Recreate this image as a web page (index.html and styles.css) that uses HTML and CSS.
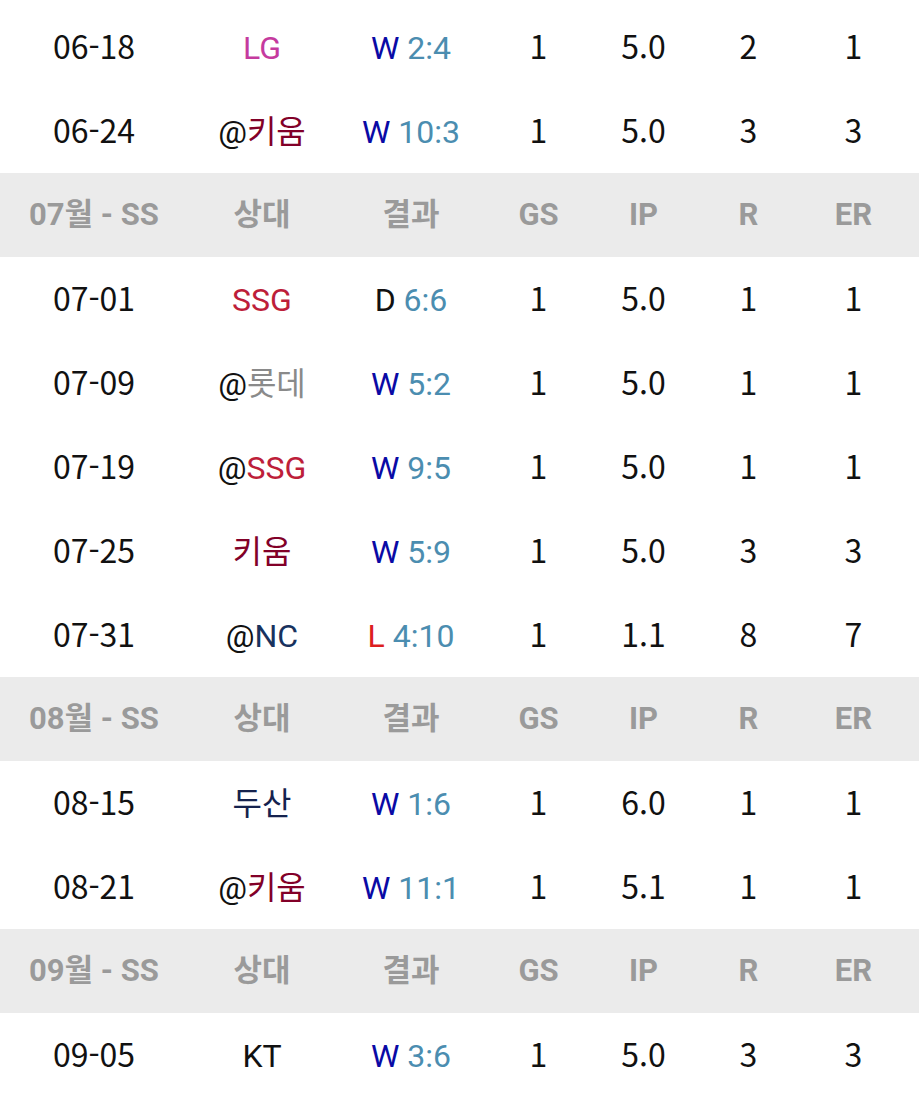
FILE: index.html
```html
<!DOCTYPE html>
<html lang="ko">
<head>
<meta charset="utf-8">
<title>월별 기록</title>
<link rel="stylesheet" href="styles.css">
</head>
<body>
<div class="table">
  <div class="row"><span>06-18</span><span class="team"><span class="lg">LG</span></span><span class="res"><span class="w">W</span> <span class="sc">2:4</span></span><span>1</span><span>5.0</span><span>2</span><span>1</span></div>
  <div class="row"><span>06-24</span><span class="team">@<span class="kw">키움</span></span><span class="res"><span class="w">W</span> <span class="sc">10:3</span></span><span>1</span><span>5.0</span><span>3</span><span>3</span></div>
  <div class="row head"><span>07월 - SS</span><span>상대</span><span>결과</span><span>GS</span><span>IP</span><span>R</span><span>ER</span></div>
  <div class="row"><span>07-01</span><span class="team"><span class="ssg">SSG</span></span><span class="res"><span class="d">D</span> <span class="sc">6:6</span></span><span>1</span><span>5.0</span><span>1</span><span>1</span></div>
  <div class="row"><span>07-09</span><span class="team">@<span class="lt">롯데</span></span><span class="res"><span class="w">W</span> <span class="sc">5:2</span></span><span>1</span><span>5.0</span><span>1</span><span>1</span></div>
  <div class="row"><span>07-19</span><span class="team">@<span class="ssg">SSG</span></span><span class="res"><span class="w">W</span> <span class="sc">9:5</span></span><span>1</span><span>5.0</span><span>1</span><span>1</span></div>
  <div class="row"><span>07-25</span><span class="team"><span class="kw">키움</span></span><span class="res"><span class="w">W</span> <span class="sc">5:9</span></span><span>1</span><span>5.0</span><span>3</span><span>3</span></div>
  <div class="row"><span>07-31</span><span class="team">@<span class="nc">NC</span></span><span class="res"><span class="l">L</span> <span class="sc">4:10</span></span><span>1</span><span>1.1</span><span>8</span><span>7</span></div>
  <div class="row head"><span>08월 - SS</span><span>상대</span><span>결과</span><span>GS</span><span>IP</span><span>R</span><span>ER</span></div>
  <div class="row"><span>08-15</span><span class="team"><span class="ds">두산</span></span><span class="res"><span class="w">W</span> <span class="sc">1:6</span></span><span>1</span><span>6.0</span><span>1</span><span>1</span></div>
  <div class="row"><span>08-21</span><span class="team">@<span class="kw">키움</span></span><span class="res"><span class="w">W</span> <span class="sc">11:1</span></span><span>1</span><span>5.1</span><span>1</span><span>1</span></div>
  <div class="row head"><span>09월 - SS</span><span>상대</span><span>결과</span><span>GS</span><span>IP</span><span>R</span><span>ER</span></div>
  <div class="row"><span>09-05</span><span class="team"><span class="kt">KT</span></span><span class="res"><span class="w">W</span> <span class="sc">3:6</span></span><span>1</span><span>5.0</span><span>3</span><span>3</span></div>
</div>
</body>
</html>
```

FILE: styles.css
```css
html, body {
  margin: 0;
  padding: 0;
  background: #ffffff;
}
body {
  padding-top: 5px;
  font-family: "Noto Sans CJK KR", "Noto Sans", sans-serif;
  color: #111111;
}
.table {
  display: flex;
  flex-direction: column;
}
.row {
  display: grid;
  grid-template-columns: 188px 148px 150px 105px 105px 105px 105px;
  box-sizing: border-box;
  height: 84px;
  padding-top: 24px;
  align-items: baseline;
  font-size: 32px;
  line-height: 1;
}
.row > span {
  text-align: center;
  white-space: nowrap;
}
.team, .res {
  font-family: Roboto, "Noto Sans CJK KR", sans-serif;
}
.head {
  padding-top: 26px;
  background: #ebebeb;
  color: #9a9a9a;
  font-weight: 700;
  font-size: 31px;
  font-family: Roboto, "Noto Sans CJK KR", sans-serif;
}
.lg { color: #c53a9e; }
.kw { color: #820028; }
.ssg { color: #bd1e3a; }
.lt { color: #8a8a8a; }
.nc { color: #18325e; }
.ds { color: #15224e; }
.kt { color: #111111; }
.w { color: #0a0aa5; }
.d { color: #111111; }
.l { color: #dd1f1f; }
.sc { color: #4b8db0; }
```
